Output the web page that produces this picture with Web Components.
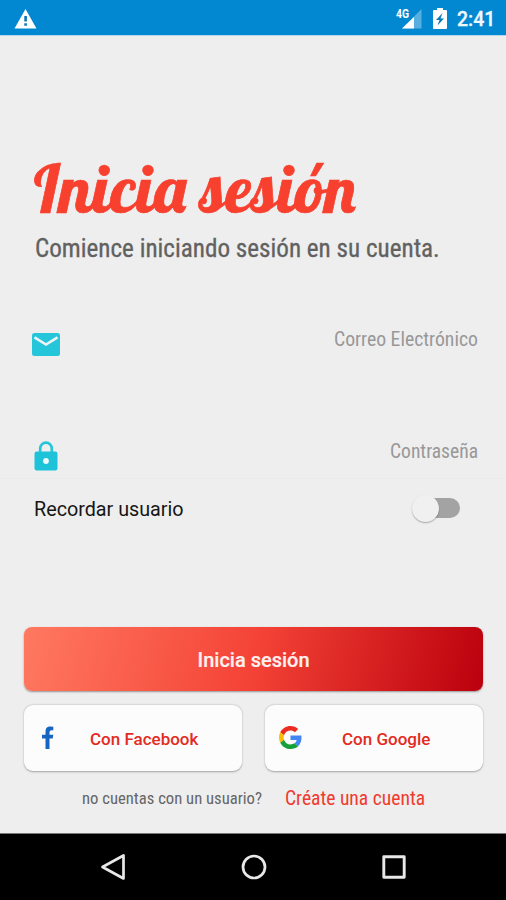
<!DOCTYPE html>
<html lang="es">
<head>
<meta charset="utf-8">
<title>Inicia sesión</title>
<style>
html,body{margin:0;height:100%}
body{background:#eee;font-family:Roboto,"Liberation Sans",sans-serif;overflow:hidden}
</style>
</head>
<body>
<login-screen></login-screen>
<script>
class Base extends HTMLElement{
  connectedCallback(){
    if(this.shadowRoot)return;
    this.attachShadow({mode:'open'}).innerHTML=this.render();
    this.ready&&this.ready();
  }
}
/* Text on one line, condensed or widened to the width given in its "w" attribute. */
customElements.define('fit-text',class extends Base{
  render(){return `<style>
    :host{display:block;flex:none;white-space:nowrap;line-height:1.2}
    span{display:inline-block;transform-origin:0 50%}
  </style><span><slot></slot></span>`}
  ready(){
    const w=+this.getAttribute('w'),s=this.shadowRoot.querySelector('span');
    this.style.width=w+'px';
    s.style.transform=`scaleX(${w/s.offsetWidth})`;
  }
});
customElements.define('status-bar',class extends Base{
  render(){return `<style>
    :host{display:flex;box-sizing:border-box;height:36px;background:#0288d1;border-bottom:1px solid #b5d5e8;align-items:center;padding:2px 11px 0 14px;color:#fff}
    .sp{flex:1}svg{display:block;flex:none}
    .bat{margin:0 10px 0 11px}
    fit-text{font-size:20px;font-weight:500;color:#f0f8ff;-webkit-text-stroke:.3px #f0f8ff}
  </style>
  <svg width="23" height="20" viewBox="0 0 23 20"><path fill="#fff" d="M11.5 0L22.5 19.5H.5Z"/><path fill="#0878b8" d="M10.3 7h2.6v5.500h-2.600zM10.300 14.200h2.600v2.500h-2.600z"/></svg>
  <div class="sp"></div>
  <svg width="30" height="26" viewBox="-4 -2 30 26"><path fill="#57aee0" d="M25.500 1v19.500H6z"/><path fill="#fff" d="M18 9v11.500H6z"/><text x="0" y="10" font-family="Roboto,sans-serif" font-weight="700" font-size="12" textLength="13" lengthAdjust="spacingAndGlyphs" fill="#fff" stroke="#0288d1" stroke-width="2" paint-order="stroke">4G</text></svg>
  <svg class="bat" width="14" height="21" viewBox="0 0 14 21"><path fill="#fff" d="M4 0h6v2h3q1 0 1 1v17q0 1-1 1H1q-1 0-1-1V3q0-1 1-1h3z"/><path fill="#0878b8" d="M9.500 5L3 12h3.500L4.500 17.500L11 10.500H7.500Z"/></svg>
  <fit-text w="38">2:41</fit-text>`}
});
customElements.define('input-row',class extends Base{
  render(){
    const mail='<svg width="28" height="23" viewBox="0 0 28 23"><rect width="28" height="23" rx="2.500" fill="#26c6da"/><path d="M2.500 4.300L14 11.500L25.500 4.300" fill="none" stroke="#f0f4f5" stroke-width="2.600"/></svg>';
    const lock='<svg width="24" height="30" viewBox="0 0 24 30"><path d="M6.200 12V7.500a5.800 5.800 0 0 1 11.600 0V12" fill="none" stroke="#26c6da" stroke-width="2.700"/><rect x=".5" y="10.500" width="23" height="19" rx="2.200" fill="#1fc3d9"/><circle cx="12" cy="20" r="2.900" fill="#eefafc"/></svg>';
    return `<style>
    :host{display:flex;height:44px;align-items:center;justify-content:space-between;padding:0 28px 0 31px}
    i{display:flex;width:29px;justify-content:center}
    svg{display:block}
    fit-text{font-size:20px;font-stretch:75%;color:#989898;padding-bottom:10.500px}
    </style><i>${this.getAttribute('icon')==='mail'?mail:lock}</i><fit-text w="${this.getAttribute('w')}">${this.getAttribute('label')}</fit-text>`}
});
customElements.define('toggle-switch',class extends Base{
  render(){return `<style>
    :host{display:grid;width:48px;height:28px;align-items:center}
    .t,.k{grid-area:1/1}
    .t{width:38px;height:20px;border-radius:10px;background:#a3a3a3;justify-self:end}
    .k{width:27px;height:27px;border-radius:50%;background:#f0f0f0;box-shadow:0 1px 1.500px rgba(0,0,0,.3)}
  </style><div class="t"></div><div class="k"></div>`}
});
customElements.define('primary-button',class extends Base{
  render(){return `<style>
    :host{display:flex;height:64px;box-sizing:border-box;align-items:center;justify-content:center;border-radius:8px;color:#fff0ee;
    background:linear-gradient(105deg,#ff7961 0%,#f44336 50%,#ba000d 100%);box-shadow:0 1px 2px rgba(0,0,0,.38)}
    fit-text{font-size:20px;font-weight:500;padding-top:2px;-webkit-text-stroke:.2px #fff0ee}
  </style><fit-text w="112">Inicia sesión</fit-text>`}
});
customElements.define('social-button',class extends Base{
  render(){return `<style>
    :host{display:flex;height:66px;box-sizing:border-box;align-items:center;border-radius:9px;background:#fcfcfc;color:#e22b22;box-shadow:0 .5px 2px rgba(0,0,0,.32);padding-top:1px}
    fit-text{font-size:17px;font-weight:500;padding-top:2px}
  </style><slot></slot><fit-text w="${this.getAttribute('w')}">${this.getAttribute('label')}</fit-text>`}
});
customElements.define('nav-bar',class extends Base{
  render(){return `<style>
    :host{display:flex;box-sizing:border-box;height:67px;background:#000;border-top:1px solid #777;align-items:center;justify-content:space-between;padding:0 99px 0 100px}
    svg{display:block}
  </style>
  <svg width="26" height="28" viewBox="0 0 26 28" fill="none" stroke="#e8e8e8" stroke-width="2.700" stroke-linejoin="round"><path d="M23.500 2.500V25.500L2.500 14Z"/></svg>
  <svg width="26" height="26" viewBox="0 0 26 26" fill="none" stroke="#e8e8e8" stroke-width="2.700"><circle cx="13" cy="13" r="11"/></svg>
  <svg width="26" height="26" viewBox="0 0 26 26" fill="none" stroke="#e8e8e8" stroke-width="2.900" stroke-linejoin="round"><path d="M2.800 2.800h20.400v20.400H2.800z"/></svg>`}
});
customElements.define('login-screen',class extends Base{
  render(){return `<style>
    :host{display:flex;flex-direction:column;height:900px;width:506px;background:#eee}
    main{flex:1;display:flex;flex-direction:column}
    h1,p{margin:0;display:flex;align-items:center;font-weight:400;padding-left:35px}
    h1{margin-top:104px;height:85px;padding-left:24px}
    h1 svg{display:block;overflow:visible}
    .sub{height:48px;margin-bottom:-2px;font-size:26px;font-stretch:75%;color:#616161;-webkit-text-stroke:.3px #616161}
    .mail{margin-top:51px}.lock{margin-top:68px;border-bottom:1px solid #ebebeb}
    .rem{height:48px;margin-top:5px;display:flex;align-items:center;justify-content:space-between;padding:0 46px 0 34px;font-size:20px;color:#161616}
    .rem fit-text{padding-top:2px}
    primary-button{margin:95px 23px 0 24px}
    .soc{display:grid;grid-template-columns:218px 218px;gap:23px;margin:14px 0 0 24px}
    .foot{display:flex;align-items:center;height:55px;color:#666;font-size:16px;padding-left:82px;gap:23px;font-stretch:75%}
    .foot .a{font-size:20px;color:#f13a2e;padding-bottom:1px}
  </style>
  <status-bar></status-bar>
  <main>
    <h1><svg width="350" height="85" viewBox="24 140 350 85"><text x="34" y="212.500" font-family="Lobster,'Liberation Serif',serif" font-size="67" textLength="321.500" lengthAdjust="spacingAndGlyphs" fill="#f8402f" stroke="#f8402f" stroke-width=".7">Inicia sesión</text></svg></h1>
    <p class="sub"><fit-text w="405">Comience iniciando sesión en su cuenta.</fit-text></p>
    <input-row class="mail" icon="mail" label="Correo Electrónico" w="144"></input-row>
    <input-row class="lock" icon="lock" label="Contraseña" w="88"></input-row>
    <div class="rem"><fit-text w="150">Recordar usuario</fit-text><toggle-switch></toggle-switch></div>
    <primary-button></primary-button>
    <div class="soc">
      <social-button label="Con Facebook" w="108"><svg style="margin:0 36px 3px 18px" width="12" height="23" viewBox="0 0 12 23"><path fill="#1765c1" d="M3.500 23V12.500H0V8.700h3.500V5.500Q3.500.5 8 .5q2 0 3.300.3v3.400H9.500q-2 0-2 2v2.500h3.800l-.6 3.800H7.500V23z"/></svg></social-button>
      <social-button label="Con Google" w="88"><svg style="margin:0 40px 3px 14px" width="23" height="23" viewBox="0 0 48 48"><path fill="#ea2d20" d="M24 9.500c3.540 0 6.710 1.220 9.210 3.600l6.850-6.850C35.900 2.380 30.470 0 24 0 14.620 0 6.510 5.380 2.560 13.220l7.980 6.190C12.430 13.720 17.740 9.500 24 9.500z"/><path fill="#4285f4" d="M46.980 24.550c0-1.570-.15-3.090-.38-4.550H24v9.020h12.940c-.58 2.960-2.260 5.480-4.780 7.180l7.730 6c4.510-4.180 7.090-10.360 7.090-17.650z"/><path fill="#fbbc05" d="M10.530 28.590c-.48-1.450-.76-2.990-.76-4.590s.27-3.140.76-4.590l-7.980-6.190C.92 16.460 0 20.120 0 24c0 3.880.92 7.540 2.560 10.780z"/><path fill="#16a03a" d="M24 48c6.480 0 11.930-2.130 15.890-5.810l-7.730-6c-2.150 1.450-4.920 2.300-8.160 2.300-6.260 0-11.570-4.220-13.470-9.910l-7.980 6.190C6.510 42.620 14.620 48 24 48z"/></svg></social-button>
    </div>
    <div class="foot"><fit-text w="180">no cuentas con un usuario?</fit-text><fit-text class="a" w="140">Créate una cuenta</fit-text></div>
  </main>
  <nav-bar></nav-bar>`}
});
</script>
</body>
</html>
